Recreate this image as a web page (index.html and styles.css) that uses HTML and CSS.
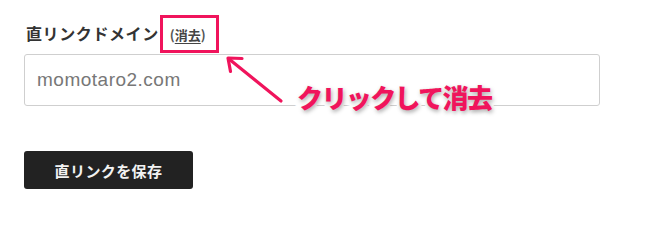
FILE: index.html
```html
<!DOCTYPE html>
<html lang="ja">
<head>
<meta charset="utf-8">
<title>直リンクドメイン</title>
<link rel="stylesheet" href="styles.css">
</head>
<body>
<div class="page">
  <div class="field">
    <div class="label-row">
      <span class="label">直リンクドメイン</span>
      <span class="clear">(<span class="clear-link">消去</span>)</span>
    </div>
    <div class="input">momotaro2.com</div>
  </div>
  <button class="save">直リンクを保存</button>

  <div class="highlight"></div>
  <svg class="arrow" width="647" height="211" viewBox="0 0 647 211">
    <g stroke="#f0145c" stroke-width="3.2" stroke-linecap="round" stroke-linejoin="round" fill="none">
      <line x1="281" y1="101" x2="229" y2="59"/>
      <polyline points="242,58.5 228,58 230.5,71.5"/>
    </g>
  </svg>
  <div class="callout">クリックして消去</div>
</div>
</body>
</html>
```

FILE: styles.css
```css
html, body {
  margin: 0;
  padding: 0;
  background: #ffffff;
}

.page {
  position: relative;
  width: 647px;
  height: 211px;
  box-sizing: border-box;
  padding: 24px 0 0 24px;
  font-family: "Noto Sans CJK JP", "Noto Sans", sans-serif;
}

.field {
  display: flex;
  flex-direction: column;
  gap: 12px;
}

.label-row {
  display: flex;
  align-items: baseline;
  gap: 11px;
  height: 18px;
  line-height: 18px;
}

.label {
  font-size: 16px;
  font-weight: 700;
  letter-spacing: 0.6px;
  color: #333333;
  padding-left: 2px;
}

.clear {
  font-size: 13px;
  font-weight: 700;
  color: #555555;
}

.clear-link {
  text-decoration: underline;
  text-underline-offset: 3px;
  text-decoration-thickness: 1px;
  color: #444444;
}

.input {
  box-sizing: border-box;
  width: 576px;
  height: 52px;
  border: 1px solid #cfcfcf;
  border-radius: 3px;
  padding-left: 12px;
  display: flex;
  align-items: center;
  font-family: "Liberation Sans", Arial, sans-serif;
  font-size: 19px;
  letter-spacing: 0.5px;
  color: #777777;
}

.save {
  margin-top: 45px;
  width: 169px;
  height: 38px;
  border: none;
  border-radius: 3px;
  background: #222222;
  color: #f2f2f2;
  font-family: "Noto Sans CJK JP", "Noto Sans", sans-serif;
  font-size: 15px;
  font-weight: 700;
  letter-spacing: 0.4px;
  padding: 0;
  display: block;
}

.highlight {
  position: absolute;
  left: 160px;
  top: 15px;
  width: 59px;
  height: 38px;
  box-sizing: border-box;
  border: 3px solid #f0145c;
}

.arrow {
  position: absolute;
  left: 0;
  top: 0;
  pointer-events: none;
}

.callout {
  position: absolute;
  left: 297px;
  top: 81px;
  font-size: 26px;
  line-height: 32px;
  font-weight: 900;
  letter-spacing: -1.6px;
  color: #f0145c;
  -webkit-text-stroke: 6px #ffffff;
  paint-order: stroke fill;
  text-shadow: 1px 2px 4px rgba(0, 0, 0, 0.35);
  white-space: nowrap;
}
```
